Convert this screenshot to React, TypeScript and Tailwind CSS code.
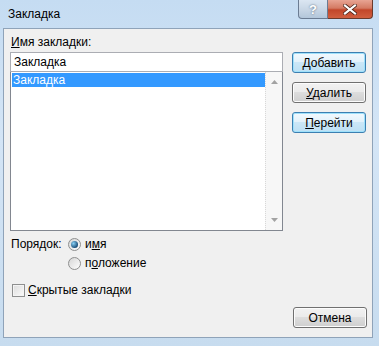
import React from "react";

const font = { fontFamily: '"Liberation Sans", Arial, sans-serif' };

function Btn({ children, focused }: { children: React.ReactNode; focused?: boolean }) {
  return (
    <div
      className={
        "flex h-[21px] w-[74px] items-center justify-center rounded-[3px] border text-[12px] text-black " +
        (focused
          ? "border-[#3c7fb1] bg-[linear-gradient(#f2f9fe_0%,#e3f2fb_45%,#cbe7f7_50%,#bde0f4_100%)] shadow-[inset_0_0_0_1px_#9fe1fb]"
          : "border-[#707070] bg-[linear-gradient(#f2f2f2_0%,#ebebeb_45%,#dddddd_50%,#cfcfcf_100%)] shadow-[inset_0_0_0_1px_#fcfcfc]")
      }
    >
      {children}
    </div>
  );
}

function Radio({ checked }: { checked?: boolean }) {
  return (
    <span className="flex h-[13px] w-[13px] items-center justify-center rounded-full border border-[#8e8f8f] bg-[linear-gradient(135deg,#d6d6d6,#fefefe)]">
      {checked && (
        <span className="h-[7px] w-[7px] rounded-full bg-[radial-gradient(circle_at_35%_35%,#8ad1f5,#0c3d69_80%)]" />
      )}
    </span>
  );
}

export default function App() {
  return (
    <div
      className="flex h-[346px] w-[379px] flex-col bg-[linear-gradient(#c5dcf2_0%,#d4e5f6_40%,#c7dcef_100%)]"
      style={font}
    >
      <div className="flex h-[28px] items-start">
        <span className="pl-[8px] pt-[7px] text-[12px] leading-[15px] text-black">Закладка</span>
        <div className="ml-auto mr-[6px] flex">
          <div className="flex h-[19px] w-[30px] items-center justify-center rounded-bl-[4px] border border-t-0 border-[#6b7c93] bg-[linear-gradient(#dbe6f2_0%,#c9d7e6_50%,#b3c6da_100%)] text-[13px] font-bold leading-none text-white [text-shadow:0_0_2px_#4a5a70]">
            ?
          </div>
          <div className="flex h-[19px] w-[45px] items-center justify-center rounded-br-[4px] border border-l-0 border-t-0 border-[#6b3a2c] bg-[linear-gradient(#e8a493_0%,#d47a63_45%,#c2462a_55%,#d15f3f_100%)]">
            <svg width="14" height="11" viewBox="0 0 14 11">
              <path d="M2 1.5 L12 9.5 M12 1.5 L2 9.5" stroke="#4b2318" strokeWidth="3.6" strokeLinecap="square" />
              <path d="M2 1.5 L12 9.5 M12 1.5 L2 9.5" stroke="#ffffff" strokeWidth="2.2" strokeLinecap="square" />
            </svg>
          </div>
        </div>
      </div>
      <div className="mb-[8px] ml-[3px] mr-[6px] flex flex-1 flex-col border border-[#8fa3b9] bg-[#f0f0f0] pl-[6px] pr-[5px] pt-[6px] text-[12px] text-black">
        <div className="flex gap-[9px]">
          <div className="flex w-[273px] flex-col">
            <div className="h-[17px] pl-[1px] leading-[15px]">
              <span className="underline">И</span>мя закладки:
            </div>
            <div className="flex h-[20px] items-center border border-[#abadb3] bg-white pl-[3px]">Закладка</div>
            <div className="flex h-[159px] border border-t-0 border-[#828790] bg-white">
              <div className="flex-1 pl-[1px] pt-[1px]">
                <div className="h-[14px] bg-[#3399ff] pl-[1px] leading-[14px] text-white">Закладка</div>
              </div>
              <div className="flex w-[17px] flex-col items-center justify-between border-l border-dotted border-[#d8d8d8] bg-[#f7f7f7] py-[8px]">
                <svg width="7" height="4" viewBox="0 0 7 4">
                  <path d="M3.5 0 L7 4 L0 4 Z" fill="#a3a3a3" />
                </svg>
                <svg width="7" height="4" viewBox="0 0 7 4">
                  <path d="M0 0 L7 0 L3.5 4 Z" fill="#a3a3a3" />
                </svg>
              </div>
            </div>
            <div className="mt-[4px] flex h-[18px] items-center pl-[1px]">
              <span className="w-[57px]">Порядок:</span>
              <Radio checked />
              <span className="pl-[4px]">
                и<span className="underline">м</span>я
              </span>
            </div>
            <div className="mt-[1px] flex h-[18px] items-center pl-[58px]">
              <Radio />
              <span className="pl-[4px]">
                п<span className="underline">о</span>ложение
              </span>
            </div>
            <div className="mt-[9px] flex h-[18px] items-center pl-[2px]">
              <span className="h-[13px] w-[13px] border border-[#8e8f8f] bg-[linear-gradient(135deg,#dcdcdc,#fbfbfb)] shadow-[inset_0_0_0_1px_#f4f4f4]" />
              <span className="pl-[3px]">
                <span className="underline">С</span>крытые закладки
              </span>
            </div>
          </div>
          <div className="flex flex-col gap-[9px] pt-[17px]">
            <Btn focused>
              <span>
                <span className="underline">Д</span>обавить
              </span>
            </Btn>
            <Btn>
              <span>
                <span className="underline">У</span>далить
              </span>
            </Btn>
            <Btn focused>
              <span>
                <span className="underline">П</span>ерейти
              </span>
            </Btn>
          </div>
        </div>
        <div className="mb-[9px] mt-auto flex justify-end">
          <Btn>Отмена</Btn>
        </div>
      </div>
    </div>
  );
}
